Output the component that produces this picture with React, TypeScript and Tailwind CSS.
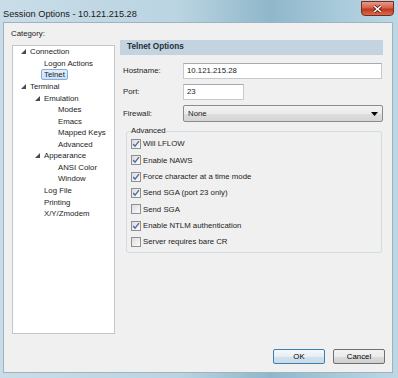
import { Fragment } from 'react';

type TreeNode = {
  label: string;
  level: number;
  expandable?: boolean;
  selected?: boolean;
};

const treeNodes: TreeNode[] = [
  { label: 'Connection', level: 0, expandable: true },
  { label: 'Logon Actions', level: 1 },
  { label: 'Telnet', level: 1, selected: true },
  { label: 'Terminal', level: 0, expandable: true },
  { label: 'Emulation', level: 1, expandable: true },
  { label: 'Modes', level: 2 },
  { label: 'Emacs', level: 2 },
  { label: 'Mapped Keys', level: 2 },
  { label: 'Advanced', level: 2 },
  { label: 'Appearance', level: 1, expandable: true },
  { label: 'ANSI Color', level: 2 },
  { label: 'Window', level: 2 },
  { label: 'Log File', level: 1 },
  { label: 'Printing', level: 1 },
  { label: 'X/Y/Zmodem', level: 1 },
];

const indents = ['pl-[8px]', 'pl-[22px]', 'pl-[36px]'];

const options = [
  { label: 'Will LFLOW', checked: true },
  { label: 'Enable NAWS', checked: true },
  { label: 'Force character at a time mode', checked: true },
  { label: 'Send SGA (port 23 only)', checked: true },
  { label: 'Send SGA', checked: false },
  { label: 'Enable NTLM authentication', checked: true },
  { label: 'Server requires bare CR', checked: false },
];

const Expander = () => (
  <svg width="5" height="5" viewBox="0 0 5 5" className="block">
    <polygon points="5,0 5,5 0,5" fill="#4a4a4a" />
  </svg>
);

const CheckBox = ({ checked }: { checked: boolean }) => (
  <div className="w-[10px] h-[10px] border border-[#8e8f8f] bg-[linear-gradient(135deg,#dcdcdc,#fbfbfb)] flex items-center justify-center">
    {checked && (
      <svg width="8" height="8" viewBox="0 0 8 8" className="block">
        <polyline points="1.2,4 3,6.2 7,1.2" fill="none" stroke="#4d6a9c" strokeWidth="1.3" />
      </svg>
    )}
  </div>
);

const App = () => {
  return (
    <div className="w-[398px] h-[378px] flex flex-col bg-[linear-gradient(90deg,#c9dde8_0%,#bad4e1_45%,#8fb7cb_68%,#a7c9da_84%,#bcd8e5_100%)] font-['Liberation_Sans',Arial,sans-serif] text-[7.8px] text-[#1c1c1c] overflow-hidden">
      {/* title bar */}
      <div className="h-[22px] flex items-start justify-between pl-[3px] pr-[4px]">
        <div className="pt-[9px] text-[9.2px] leading-[11px] text-[#1a1a1a]">Session Options - 10.121.215.28</div>
        <div className="mt-[1px] w-[33px] h-[15px] rounded-b-[4px] border border-[#7a2a1c] bg-[linear-gradient(180deg,#e59a86_0%,#d4634a_45%,#c2371f_55%,#d46d4f_100%)] flex items-center justify-center">
          <svg width="9" height="8" viewBox="0 0 9 8" className="block">
            <path d="M1 1 L8 7 M8 1 L1 7" stroke="#5a1a10" strokeWidth="3" />
            <path d="M1 1 L8 7 M8 1 L1 7" stroke="#ffffff" strokeWidth="1.6" />
          </svg>
        </div>
      </div>

      {/* client area */}
      <div className="flex-1 ml-[3px] mr-[5px] mb-[5px] bg-[#f0f0f0] border border-[#9fb2be] flex flex-col">
        <div className="flex pl-[8px]">
          {/* category tree */}
          <div className="w-[103px] pt-[5px]">
            <div className="h-[12px] leading-[12px] -ml-px">Category:</div>
            <div className="mt-[5px] h-[289px] bg-white border border-[#c3c6cc]">
              {treeNodes.map((node) => (
                <div key={node.label + node.level} className={`h-[11.57px] flex items-center ${indents[node.level]}`}>
                  <div className="w-[5px] mr-[4px]">{node.expandable && <Expander />}</div>
                  {node.selected ? (
                    <span className="-ml-[3px] px-[2px] h-[11px] leading-[10px] rounded-[2px] border border-[#84acdd] bg-[linear-gradient(180deg,#e5f0fc,#c9dffa)]">
                      {node.label}
                    </span>
                  ) : (
                    <span className="leading-[11px]">{node.label}</span>
                  )}
                </div>
              ))}
            </div>
          </div>

          {/* telnet options */}
          <div className="ml-[5px] mt-[17px] w-[263px]">
            <div className="h-[15px] bg-[#c3d3df] pl-[7px] flex items-center font-bold text-[8.2px] text-[#22303c]">
              Telnet Options
            </div>

            <div className="mt-[8px] flex items-center pl-[3px] pr-[1px]">
              <div className="w-[60px]">Hostname:</div>
              <div className="flex-1 h-[16px] bg-white border border-[#c5cad1] border-t-[#a6abb2] pl-[3px] leading-[14px]">10.121.215.28</div>
            </div>

            <div className="mt-[5px] flex items-center pl-[3px]">
              <div className="w-[60px]">Port:</div>
              <div className="w-[61px] h-[16px] bg-white border border-[#c5cad1] border-t-[#a6abb2] pl-[3px] leading-[14px]">23</div>
            </div>

            <div className="mt-[5px] flex items-center pl-[3px]">
              <div className="w-[60px]">Firewall:</div>
              <div className="flex-1 h-[17px] rounded-[2px] border border-[#8a8b8c] bg-[linear-gradient(180deg,#f3f3f3_0%,#ebebeb_50%,#dddddd_51%,#d6d6d6_100%)] flex items-center justify-between pl-[4px] pr-[4px]">
                <span>None</span>
                <svg width="7" height="4" viewBox="0 0 7 4" className="block">
                  <polygon points="0,0 7,0 3.5,4" fill="#000" />
                </svg>
              </div>
            </div>

            <fieldset className="mt-[3px] ml-[6px] mr-[1px] h-[128px] border border-[#d2dbe2] rounded-[3px] pl-[4px]">
              <legend className="px-0 h-[12px] leading-[12px] text-[#1a1a1a]">Advanced</legend>
              <div className="-mt-[1px]">
                {options.map((opt) => (
                  <Fragment key={opt.label}>
                    <div className="h-[16.33px] flex items-center">
                      <CheckBox checked={opt.checked} />
                      <span className="ml-[2px]">{opt.label}</span>
                    </div>
                  </Fragment>
                ))}
              </div>
            </fieldset>
          </div>
        </div>

        {/* buttons */}
        <div className="mt-auto flex justify-end gap-[8px] pr-[7px] pb-[8px]">
          <button className="w-[52px] h-[15px] rounded-[2px] border border-[#3c7fb1] bg-[linear-gradient(180deg,#f4f8fb_0%,#e6eef5_50%,#d3e1ec_51%,#c9dbe9_100%)] leading-[13px] text-black">
            OK
          </button>
          <button className="w-[52px] h-[15px] rounded-[2px] border border-[#707070] bg-[linear-gradient(180deg,#f2f2f2_0%,#ebebeb_50%,#dddddd_51%,#cfcfcf_100%)] leading-[13px] text-black">
            Cancel
          </button>
        </div>
      </div>
    </div>
  );
};

export default App;
